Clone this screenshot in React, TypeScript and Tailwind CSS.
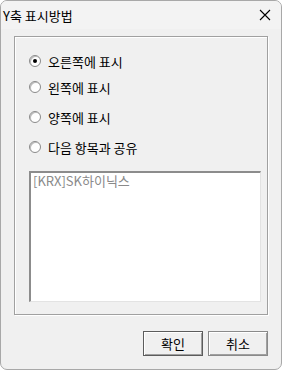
import { useState } from 'react';

const options = ['오른쪽에 표시', '왼쪽에 표시', '양쪽에 표시', '다음 항목과 공유'];
const optionTops = ['mt-[18px]', 'mt-[14px]', 'mt-[18px]', 'mt-[18px]'];

const Radio = ({ checked }: { checked: boolean }) => (
  <span className="relative w-[12px] h-[12px] rounded-full border border-[#8a8a8a] bg-white shadow-[inset_1px_1px_0_#bdbdbd] flex items-center justify-center">
    {checked && <span className="w-[4px] h-[4px] rounded-full bg-black" />}
  </span>
);

export default function App() {
  const [selected, setSelected] = useState(0);

  return (
    <div className="w-[284px] h-[372px] bg-white" style={{ fontFamily: '"Noto Sans CJK KR", "Noto Sans", sans-serif' }}>
      <div className="w-[282px] h-[370px] rounded-[7px] border border-[#a8a8a8] bg-[#f0f0f0] overflow-hidden flex flex-col">
        {/* title bar */}
        <div className="h-[28px] flex items-center justify-between pl-[2px] pr-[10px] bg-[#f3f3f3]">
          <span className="text-[13px] text-black leading-none">Y축 표시방법</span>
          <svg width="12" height="12" viewBox="0 0 12 12" className="text-black">
            <path d="M1 1 L11 11 M11 1 L1 11" stroke="currentColor" strokeWidth="1.1" />
          </svg>
        </div>

        {/* group box */}
        <div className="mt-[7px] ml-[13px] w-[254px] h-[279px] border border-[#a0a0a0] shadow-[inset_1px_1px_0_#fff,1px_1px_0_#fff] flex flex-col pl-[14px]">
          {options.map((label, i) => (
            <div
              key={label}
              onClick={() => setSelected(i)}
              className={`${optionTops[i]} flex items-center gap-[7px] h-[12px] cursor-default`}
            >
              <Radio checked={selected === i} />
              <span className="text-[13px] text-black leading-none">{label}</span>
            </div>
          ))}

          {/* list box */}
          <div className="mt-[18px] w-[232px] h-[131px] bg-white border-t-2 border-l-2 border-t-[#8c8c8c] border-l-[#8c8c8c] border-b border-r border-b-[#e3e3e3] border-r-[#e3e3e3] px-[2px]">
            <span className="block text-[13px] text-[#8a8a8a] leading-[16px]">[KRX]SK하이닉스</span>
          </div>
        </div>

        {/* buttons */}
        <div className="flex justify-end gap-[5px] mt-[16px] pr-[13px]">
          <button className="w-[60px] h-[25px] bg-[#f0f0f0] border border-[#5c5c5c] shadow-[inset_1px_1px_0_#fff,inset_-1px_-1px_0_#a0a0a0] text-[13px] text-black leading-none">
            확인
          </button>
          <button className="w-[60px] h-[25px] bg-[#f0f0f0] border border-[#8a8a8a] shadow-[inset_1px_1px_0_#fff,inset_-1px_-1px_0_#a0a0a0] text-[13px] text-black leading-none">
            취소
          </button>
        </div>
      </div>
    </div>
  );
}
